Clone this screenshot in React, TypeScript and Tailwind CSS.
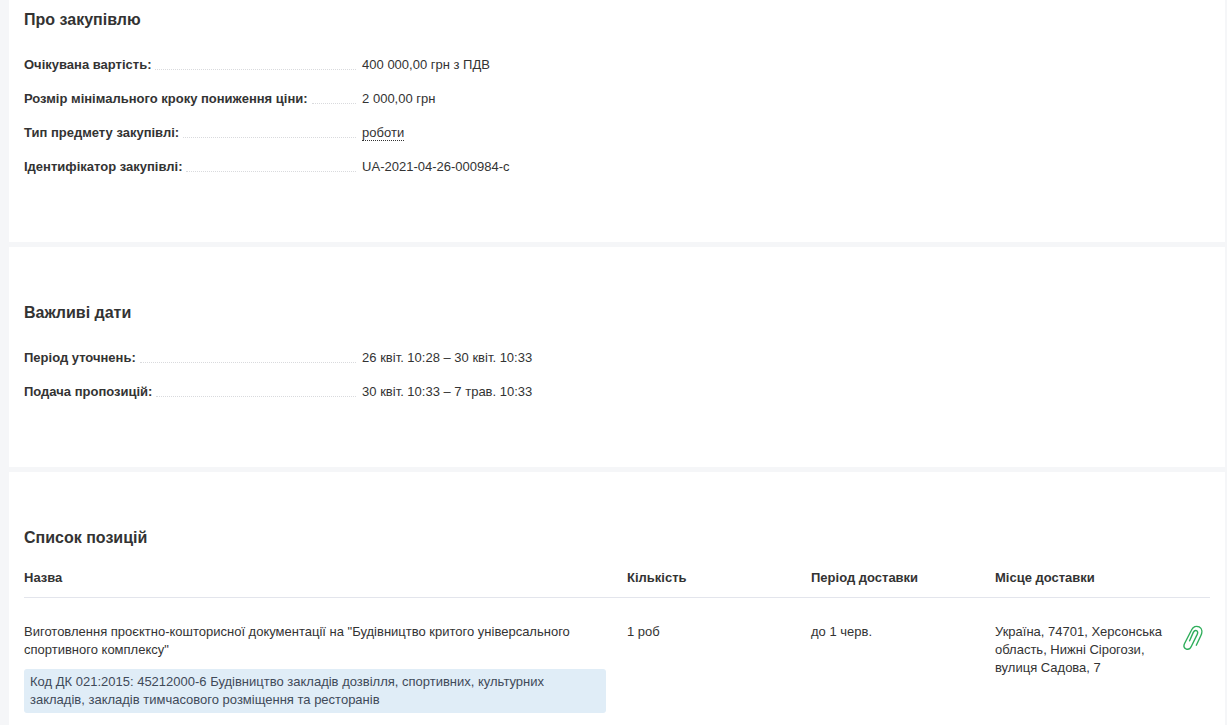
import type { ReactNode } from "react";

type Fact = { label: string; value: ReactNode };

const aboutFacts: Fact[] = [
  { label: "Очікувана вартість:", value: "400 000,00 грн з ПДВ" },
  { label: "Розмір мінімального кроку пониження ціни:", value: "2 000,00 грн" },
  {
    label: "Тип предмету закупівлі:",
    value: <span className="border-b border-dotted border-[#333333]">роботи</span>,
  },
  { label: "Ідентифікатор закупівлі:", value: "UA-2021-04-26-000984-c" },
];

const dateFacts: Fact[] = [
  { label: "Період уточнень:", value: "26 квіт. 10:28 – 30 квіт. 10:33" },
  { label: "Подача пропозицій:", value: "30 квіт. 10:33 – 7 трав. 10:33" },
];

function Heading({ children }: { children: ReactNode }) {
  return <h2 className="text-base leading-6 font-bold">{children}</h2>;
}

function FactList({ facts }: { facts: Fact[] }) {
  return (
    <dl className="mt-6 flex flex-col gap-4">
      {facts.map((fact) => (
        <div key={fact.label} className="flex gap-1.5">
          <dt className="flex w-[28%] shrink-0 gap-1 font-bold">
            {fact.label}
            <span className="mb-1 flex-1 self-end border-b border-dotted border-[#d9dadd]" />
          </dt>
          <dd>{fact.value}</dd>
        </div>
      ))}
    </dl>
  );
}

function PaperclipIcon() {
  return (
    <svg viewBox="0 0 20 26" className="h-[26px] w-5" fill="none" stroke="#2fae5b" strokeWidth="1.4" strokeLinecap="round" aria-hidden="true">
      <path d="M13.3 20.2 L17.8 10.8 C19.5 7.2 19.2 3.4 16.2 1.9 C13.2 .5 10 1.8 8.4 5.2 L1.7 18.2 C.3 21 .9 23 2.9 23.9 C4.9 24.8 7.1 24 8.4 21.2 L14.2 9.4 C15 7.6 14.8 6.3 13.5 5.7 C12.2 5.1 11.1 5.8 10.3 7.4 L6.6 15.8" />
    </svg>
  );
}

export default function App() {
  return (
    <main className="flex min-h-screen flex-col gap-[5px] bg-[#f5f6f8] pr-0.5 pl-[9px] font-['Liberation_Sans',Arial,sans-serif] text-[13px] leading-[18px] text-[#333333]">
      <section className="bg-white px-[15px] pt-2 pb-[66px]">
        <Heading>Про закупівлю</Heading>
        <FactList facts={aboutFacts} />
      </section>

      <section className="bg-white px-[15px] pt-[54px] pb-[66px]">
        <Heading>Важливі дати</Heading>
        <FactList facts={dateFacts} />
      </section>

      <section className="flex-1 bg-white px-[15px] pt-[54px] pb-3">
        <Heading>Список позицій</Heading>
        <table className="mt-[19px] w-full table-fixed border-collapse text-left align-top">
          <colgroup>
            <col />
            <col className="w-[184px]" />
            <col className="w-[184px]" />
            <col className="w-[184px]" />
            <col className="w-[31px]" />
          </colgroup>
          <thead>
            <tr className="border-b border-[#e3e5ec]">
              <th scope="col" className="pb-2.5 font-bold">Назва</th>
              <th scope="col" className="pb-2.5 font-bold">Кількість</th>
              <th scope="col" className="pb-2.5 font-bold">Період доставки</th>
              <th scope="col" className="pb-2.5 font-bold">Місце доставки</th>
              <td />
            </tr>
          </thead>
          <tbody>
            <tr className="align-top">
              <td className="pt-[25px] pr-[21px]">
                <p>Виготовлення проєктно-кошторисної документації на "Будівництво критого універсального спортивного комплексу"</p>
                <p className="mt-2.5 rounded-[3px] bg-[#e0edf7] px-1.5 py-1 text-[#3f4a59]">
                  Код ДК 021:2015: 45212000-6 Будівництво закладів дозвілля, спортивних, культурних закладів, закладів тимчасового розміщення та ресторанів
                </p>
              </td>
              <td className="pt-[25px]">1 роб</td>
              <td className="pt-[25px]">до 1 черв.</td>
              <td className="pt-[25px] pr-4">Україна, 74701, Херсонська область, Нижні Сірогози, вулиця Садова, 7</td>
              <td className="pt-[25px]">
                <button type="button" aria-label="Документи" className="ml-1 block cursor-pointer pt-0.5">
                  <PaperclipIcon />
                </button>
              </td>
            </tr>
          </tbody>
        </table>
      </section>
    </main>
  );
}
